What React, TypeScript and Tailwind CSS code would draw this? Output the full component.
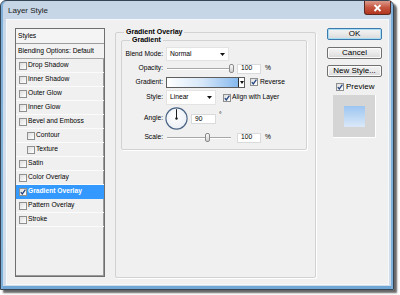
import React from 'react';

const Check: React.FC<{ checked?: boolean; className?: string }> = ({ checked, className = '' }) => (
  <span
    className={`flex h-[8px] w-[8px] shrink-0 items-center justify-center border border-[#8e8f8f] bg-gradient-to-br from-[#dedede] to-white ${className}`}
  >
    {checked && (
      <svg viewBox="0 0 6 6" className="h-[6px] w-[6px]">
        <path d="M0.8 3.1 L2.3 4.9 L5.4 0.6" fill="none" stroke="#1f3f7d" strokeWidth="1.2" />
      </svg>
    )}
  </span>
);

const Arrow: React.FC = () => (
  <svg width="5" height="3" viewBox="0 0 5 3">
    <path d="M0 0 H5 L2.5 3 Z" fill="#111" />
  </svg>
);

const Select: React.FC<{ value: string; className: string }> = ({ value, className }) => (
  <div className={`flex items-center justify-between border border-[#e3e3e3] bg-white pl-[3px] pr-[3px] ${className}`}>
    <span>{value}</span>
    <Arrow />
  </div>
);

const Slider: React.FC<{ thumb: string }> = ({ thumb }) => (
  <div className="relative h-[9px] w-[68px]">
    <div className="absolute left-[1px] right-[3px] top-[4px] h-[2px] border-t border-b border-t-[#a8a8a8] border-b-white" />
    <div
      className={`absolute top-0 h-[9px] w-[5px] rounded-[2px] border border-[#8a8a8a] bg-gradient-to-b from-[#fbfbfb] to-[#cfcfcf] ${thumb}`}
    />
  </div>
);

const Field: React.FC<{ value: string; className: string }> = ({ value, className }) => (
  <div className={`flex items-center border border-[#d9dadc] bg-white pl-[3px] ${className}`}>{value}</div>
);

const Button: React.FC<{ label: string; primary?: boolean; className?: string }> = ({ label, primary, className = '' }) => (
  <div
    className={`flex h-[12px] w-[55px] items-center justify-center rounded-[2px] border bg-gradient-to-b from-[#f4f4f4] via-[#e9e9e9] to-[#d9d9d9] text-[8px] ${
      primary ? 'border-[#3d7bad] shadow-[inset_0_0_0_1px_#a8dcf4]' : 'border-[#707070] shadow-[inset_0_0_0_1px_#fbfbfb]'
    } ${className}`}
  >
    {label}
  </div>
);

const effects = [
  { label: 'Drop Shadow' },
  { label: 'Inner Shadow' },
  { label: 'Outer Glow' },
  { label: 'Inner Glow' },
  { label: 'Bevel and Emboss' },
  { label: 'Contour', indent: true },
  { label: 'Texture', indent: true },
  { label: 'Satin' },
  { label: 'Color Overlay' },
  { label: 'Gradient Overlay', checked: true, active: true },
  { label: 'Pattern Overlay' },
  { label: 'Stroke' },
];

const App: React.FC = () => {
  return (
    <div className="h-[295px] w-[400px] overflow-hidden bg-white font-['Liberation_Sans',Arial,sans-serif] text-[6.7px] leading-none text-black">
      <div className="flex h-[290px] w-[394px] flex-col rounded-t-[6px] border border-[#364454] bg-gradient-to-b from-[#c6d5e6] via-[#d3deea] to-[#d0dce9] shadow-[inset_2px_0_0_#7eb0dc,inset_-2px_0_0_#7eb0dc,inset_0_-3px_0_#6fa6d6,3px_3px_2px_rgba(0,0,0,0.6)]">
        {/* Title bar */}
        <div className="flex h-[19px] items-start justify-between">
          <span className="ml-[7px] mt-[5px] text-[8px] leading-[10px] text-[#1b1b1b]">Layer Style</span>
          <div className="mr-[2px] flex h-[14px] w-[27px] items-center justify-center rounded-b-[3px] border border-t-0 border-[#5a2a22] bg-gradient-to-b from-[#dc9a8c] via-[#c5553f] to-[#b3341c]">
            <svg width="9" height="8" viewBox="0 0 9 8">
              <path d="M1.5 1 L7.5 7 M7.5 1 L1.5 7" stroke="#ffffff" strokeWidth="1.8" />
            </svg>
          </div>
        </div>

        {/* Client area */}
        <div className="ml-[6px] flex h-[264px] w-[381px] bg-[#f0f0f0] pl-[8px] pt-[8px] shadow-[0_0_0_1px_#f6f9fc]">
          {/* Style list */}
          <div className="flex h-[249px] w-[90px] flex-col border border-[#6f6f6f] bg-[#f0f0f0] shadow-[inset_-1px_-1px_0_#9a9a9a]">
            <div className="flex h-[15px] items-center border-b border-[#9c9c9c] bg-[#f4f4f4] pl-[2px]">Styles</div>
            <div className="flex h-[15px] items-center border-b border-[#a9a9a9] bg-[#f2f2f2] pl-[2px]">
              Blending Options: Default
            </div>
            {effects.map(e => (
              <div
                key={e.label}
                className={`flex h-[14px] items-center gap-[1px] border-b ${
                  e.active ? 'border-[#3399ff] bg-[#3399ff] font-bold text-white' : 'border-[#fbfbfb]'
                } ${e.indent ? 'pl-[11px]' : 'pl-[3px]'}`}
              >
                <Check checked={e.checked} />
                <span>{e.label}</span>
              </div>
            ))}
          </div>

          {/* Gradient Overlay group */}
          <fieldset className="ml-[10px] h-[250px] w-[201px] rounded-[2px] border border-[#d2d2d2] shadow-[1px_1px_0_#ffffff]">
            <legend className="ml-[8px] px-[2px] text-[7px] font-bold leading-[8px]">Gradient Overlay</legend>
            <fieldset className="ml-[5px] w-[186px] rounded-[2px] border border-[#d2d2d2] pb-[3px] shadow-[1px_1px_0_#ffffff]">
              <legend className="ml-[8px] px-[2px] text-[7px] font-bold leading-[8px]">Gradient</legend>
              <div className="mt-[3px] flex flex-col">
                {/* Blend Mode */}
                <div className="flex h-[14px] items-center">
                  <span className="w-[41px] text-right">Blend Mode:</span>
                  <Select value="Normal" className="ml-[3px] h-[14px] w-[63px]" />
                </div>
                {/* Opacity */}
                <div className="flex h-[15px] items-center">
                  <span className="w-[41px] text-right">Opacity:</span>
                  <div className="ml-[3px]">
                    <Slider thumb="left-[63px]" />
                  </div>
                  <Field value="100" className="ml-[3px] h-[10px] w-[24px]" />
                  <span className="ml-[4px]">%</span>
                </div>
                {/* Gradient */}
                <div className="flex h-[12px] items-center">
                  <span className="w-[41px] text-right">Gradient:</span>
                  <div className="ml-[3px] flex h-[11px] w-[79px] border border-[#5e5e5e]">
                    <div className="flex-1 bg-gradient-to-r from-white via-[#d6e7f9] to-[#86b9ee]" />
                    <div className="flex w-[6px] items-center justify-center border-l border-[#2b2b2b] bg-white">
                      <svg width="4" height="3" viewBox="0 0 4 3">
                        <path d="M0 0 H4 L2 3 Z" fill="#111" />
                      </svg>
                    </div>
                  </div>
                  <Check checked className="ml-[5px]" />
                  <span className="ml-[2px]">Reverse</span>
                </div>
                {/* Style */}
                <div className="flex h-[19px] items-center">
                  <span className="w-[41px] text-right">Style:</span>
                  <Select value="Linear" className="ml-[3px] h-[15px] w-[50px]" />
                  <Check checked className="ml-[7px]" />
                  <span className="ml-[1px]">Align with Layer</span>
                </div>
                {/* Angle */}
                <div className="flex h-[22px] items-center">
                  <span className="w-[41px] text-right">Angle:</span>
                  <svg width="23" height="23" viewBox="0 0 23 23" className="ml-[2px]">
                    <defs>
                      <radialGradient id="dial" cx="45%" cy="40%" r="65%">
                        <stop offset="0" stopColor="#ffffff" />
                        <stop offset="1" stopColor="#e9eef4" />
                      </radialGradient>
                    </defs>
                    <circle cx="11.5" cy="11.5" r="10.6" fill="url(#dial)" stroke="#4a6486" strokeWidth="1.1" />
                    <line x1="11.5" y1="11.5" x2="11.5" y2="2.2" stroke="#1c1c1c" strokeWidth="1" />
                    <circle cx="11.5" cy="11.5" r="1.2" fill="#1c1c1c" />
                  </svg>
                  <Field value="90" className="ml-[3px] mt-[2px] h-[10px] w-[25px]" />
                  <span className="ml-[3px] self-start pt-[5px]">°</span>
                </div>
                {/* Scale */}
                <div className="flex h-[17px] items-center">
                  <span className="w-[41px] text-right">Scale:</span>
                  <div className="ml-[3px]">
                    <Slider thumb="left-[39px]" />
                  </div>
                  <Field value="100" className="ml-[3px] h-[10px] w-[24px]" />
                  <span className="ml-[4px]">%</span>
                </div>
              </div>
            </fieldset>
          </fieldset>

          {/* Buttons */}
          <div className="ml-[11px] flex w-[55px] flex-col">
            <Button label="OK" primary />
            <Button label="Cancel" className="mt-[7px]" />
            <Button label="New Style..." className="mt-[6px]" />
            <div className="mt-[6px] flex h-[8px] items-center pl-[9px] text-[8px]">
              <Check checked />
              <span className="ml-[2px]">Preview</span>
            </div>
            <div className="ml-[6px] mt-[4px] flex h-[43px] w-[43px] items-center justify-center border-b border-r border-white bg-[#d5d5d5]">
              <div className="h-[21px] w-[21px] bg-gradient-to-b from-[#9cc5f1] to-[#dbe9f8]" />
            </div>
          </div>
        </div>
      </div>
    </div>
  );
};

export default App;
